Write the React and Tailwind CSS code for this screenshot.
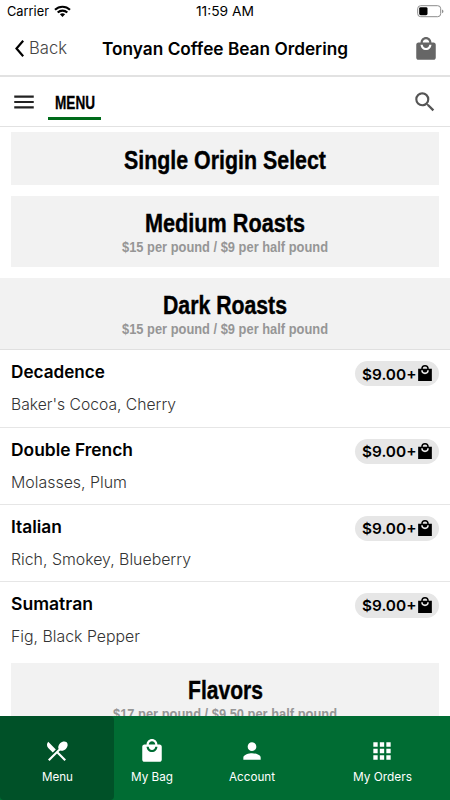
import React, { useState } from 'react';
import {
  MdApps,
  MdLocalMall,
  MdMenu,
  MdPerson,
  MdRestaurantMenu,
  MdSearch
} from 'react-icons/md';

const darkRoasts = [
  { name: 'Decadence', notes: "Baker's Cocoa, Cherry", nameWidth: 94, notesWidth: 165 },
  { name: 'Double French', notes: 'Molasses, Plum', nameWidth: 122, notesWidth: 116 },
  { name: 'Italian', notes: 'Rich, Smokey, Blueberry', nameWidth: 51, notesWidth: 180 },
  { name: 'Sumatran', notes: 'Fig, Black Pepper', nameWidth: 82, notesWidth: 129 }
];

// One line of text set to a given width, used for the condensed headings too
function Fit({ width, className, y, h, children }) {
  return (
    <svg width={width} height={h} className="block shrink-0 overflow-visible">
      <text x={0} y={y} textLength={width} lengthAdjust="spacingAndGlyphs" className={className}>
        {children}
      </text>
    </svg>
  );
}

function StatusBar() {
  return (
    <div className="flex h-[22px] shrink-0 items-center justify-between pr-[6px] pl-[7px]">
      <div className="flex w-[119px] items-center gap-[5px]">
        <Fit width={42} h={16} y={13} className="text-[13px]">Carrier</Fit>
        <svg width="17" height="13" viewBox="0 0 17 13" fill="none" stroke="black" strokeWidth="2.1">
          <path d="M1 4.8c4.2-4.1 10.8-4.1 15 0" />
          <path d="M3.7 7.6c2.7-2.6 6.9-2.6 9.6 0" />
          <path d="M8.5 12 5.9 9.3c1.5-1.4 3.7-1.4 5.2 0Z" fill="black" stroke="none" />
        </svg>
      </div>
      <Fit width={58} h={16} y={13} className="text-[13px]">11:59 AM</Fit>
      <div className="flex w-[121px] justify-end">
        <svg width="27" height="13" viewBox="0 0 27 13">
          <rect x="0.7" y="0.7" width="23" height="11" rx="3" fill="none" stroke="#8c8c8c" />
          <rect x="2.2" y="2.2" width="8.3" height="8" rx="1.4" />
          <path d="M25.2 4.4c1.6.6 1.6 3.2 0 3.8Z" fill="#777" />
        </svg>
      </div>
    </div>
  );
}

function RoastCard({ title, width, price, priceWidth, open }) {
  return (
    <div
      className={`flex shrink-0 flex-col items-center bg-[#f2f2f2] ${price ? 'h-[71px]' : 'h-[53px]'} ${open ? 'h-[72px] border-b border-[#e0e0e0]' : 'mx-[11px]'}`}
    >
      <div className={price ? 'pt-[12px]' : 'pt-[13px]'}>
        <Fit
          width={width}
          h={32}
          y={23.5}
          className="stroke-black stroke-[0.4px] font-['Liberation_Sans'] text-[26px] font-bold"
        >
          {title}
        </Fit>
      </div>
      {price && (
        <Fit
          width={priceWidth}
          h={18}
          y={12}
          className="fill-[#969696] font-['Liberation_Sans'] text-[15.5px] font-bold"
        >
          {price}
        </Fit>
      )}
    </div>
  );
}

function CoffeeRow({ item }) {
  return (
    <div className="flex h-[77.2px] shrink-0 justify-between border-b-[1.5px] border-[#e6e6e6] pr-[11px] pl-[11px] last:border-b-0">
      <div>
        <div className="pt-[12px]">
          <Fit width={item.nameWidth} h={22} y={15.7} className="text-[17px] font-semibold">
            {item.name}
          </Fit>
        </div>
        <div className="pt-[10px]">
          <Fit width={item.notesWidth} h={22} y={16.3} className="fill-[#333] text-[16px] font-light">
            {item.notes}
          </Fit>
        </div>
      </div>
      <div className="mt-[11px] flex h-[25px] w-[84px] items-center gap-[2px] rounded-full bg-[#e6e6e6] pl-[6.5px]">
        <Fit width={54.5} h={20} y={15.5} className="text-[15px] font-semibold">$9.00+</Fit>
        <svg width="14" height="16" viewBox="0 0 18 21" className="-mt-px">
          <path
            fillRule="evenodd"
            d="M18 5h-4a5 5 0 0 0-10 0H0v16h18ZM9 2a3 3 0 0 1 3 3H6a3 3 0 0 1 3-3Zm0 10a5 5 0 0 1-5-5h2a3 3 0 0 0 6 0h2a5 5 0 0 1-5 5Z"
          />
        </svg>
      </div>
    </div>
  );
}

function NavItem({ Icon, label, width, className, active }) {
  return (
    <button
      className={`flex h-full flex-col items-center pt-[22px] ${className} ${active ? 'rounded-r-[4px] rounded-bl-[4px] bg-[#005128]' : ''}`}
    >
      <Icon size={26} color="white" />
      <div className="pt-[3px]">
        <Fit width={width} h={18} y={14} className="fill-white text-[12px]">{label}</Fit>
      </div>
    </button>
  );
}

export default function App() {
  const [tab, setTab] = useState('menu');

  return (
    <div className="flex h-[800px] w-[450px] flex-col overflow-hidden bg-white font-['Inter',sans-serif] text-black">
      <StatusBar />

      <header className="flex h-[55px] shrink-0 items-center border-b-2 border-[#e2e2e2] pr-[11px] pl-[15px]">
        <div className="flex w-[87px] items-center gap-[5px]">
          <svg width="9" height="17" viewBox="0 0 9 17" fill="none" stroke="black" strokeWidth="2.2">
            <path d="M8.2 0.8 1.5 8.5l6.7 7.7" />
          </svg>
          <Fit width={38} h={22} y={16} className="fill-[#444] text-[17px] font-light">Back</Fit>
        </div>
        <Fit width={246} h={22} y={16.5} className="text-[17px] font-semibold">
          Tonyan Coffee Bean Ordering
        </Fit>
        <MdLocalMall size={26} color="#666" className="ml-auto" />
      </header>

      <div className="flex h-[50px] shrink-0 items-center border-b border-[#e2e2e2] pr-[12px] pl-[11px]">
        <MdMenu size={26} color="#222" />
        <div className="ml-[11px] flex h-full w-[53px] flex-col items-center justify-end pb-[6px]">
          <Fit
            width={40}
            h={20}
            y={14.5}
            className="stroke-black stroke-[0.3px] font-['Liberation_Sans'] text-[17.5px] font-bold"
          >
            MENU
          </Fit>
          <div className="mt-[3px] h-[3px] w-full bg-[#006b1a]" />
        </div>
        <MdSearch size={26} color="#555" className="ml-auto" />
      </div>

      <main className="flex min-h-0 flex-1 flex-col overflow-hidden pt-[5.4px]">
        <div className="flex shrink-0 flex-col gap-[11px]">
          <RoastCard title="Single Origin Select" width={202} />
          <RoastCard title="Medium Roasts" width={160} price="$15 per pound / $9 per half pound" priceWidth={206} />
          <RoastCard title="Dark Roasts" width={124} price="$15 per pound / $9 per half pound" priceWidth={206} open />
        </div>
        <div className="h-[313px] shrink-0">
          {darkRoasts.map(item => (
            <CoffeeRow key={item.name} item={item} />
          ))}
        </div>
        <RoastCard title="Flavors" width={75} price="$17 per pound / $9.50 per half pound" priceWidth={224} />
      </main>

      <nav className="flex h-[84px] shrink-0 bg-[#006c33]">
        <NavItem Icon={MdRestaurantMenu} label="Menu" width={31} className="w-[114px]" active={tab === 'menu'} />
        <NavItem Icon={MdLocalMall} label="My Bag" width={42} className="w-[76px]" />
        <NavItem Icon={MdPerson} label="Account" width={46} className="w-[124px]" />
        <NavItem Icon={MdApps} label="My Orders" width={59} className="w-[136px]" />
      </nav>
    </div>
  );
}
